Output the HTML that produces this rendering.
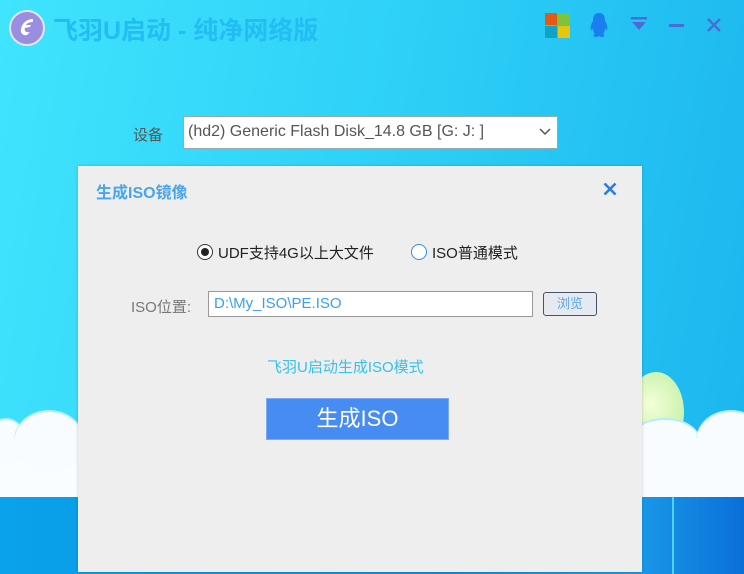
<!DOCTYPE html>
<html><head><meta charset="utf-8"><style>
*{margin:0;padding:0;box-sizing:border-box}
body{width:744px;height:574px;overflow:hidden;position:relative;font-family:"Liberation Sans","Noto Sans CJK SC",sans-serif;background:linear-gradient(100deg,#40e4fc 0%,#2fd2f8 45%,#1bb5ee 100%)}
.abs{position:absolute}
</style></head><body>
<div class="abs" style="left:0;top:497px;width:744px;height:77px;background:linear-gradient(90deg,#0aa2ea,#0c8fe2 60%,#1a9be8 85%,#0a6fd8)"></div>
<!-- clouds left -->
<div class="abs" style="left:0;top:445px;width:80px;height:52px;background:#fafdff"></div>
<div class="abs" style="left:-14px;top:420px;width:40px;height:44px;border-radius:50%;background:#f8fcff;box-shadow:0 -2px 0 #b6ecfa"></div>
<div class="abs" style="left:14px;top:412px;width:70px;height:60px;border-radius:50%;background:#f8fcff;box-shadow:0 -2px 0 #b6ecfa"></div>
<!-- sun and clouds right -->
<div class="abs" style="left:628px;top:372px;width:56px;height:80px;border-radius:50%;background:radial-gradient(circle at 40% 40%,#f4ffd8,#c4f0a8 70%)"></div>
<div class="abs" style="left:642px;top:440px;width:102px;height:57px;background:#f8fcff"></div>
<div class="abs" style="left:630px;top:420px;width:70px;height:44px;border-radius:50%;background:#f8fcff;box-shadow:0 -2px 0 #b6ecfa"></div>
<div class="abs" style="left:696px;top:412px;width:70px;height:60px;border-radius:50%;background:#f8fcff;box-shadow:0 -2px 0 #b6ecfa"></div>
<div class="abs" style="left:672px;top:497px;width:2px;height:77px;background:#4fd0f5"></div>
<!-- logo -->
<div class="abs" style="left:9px;top:10px;width:36px;height:36px;border-radius:50%;background:#9a8ee0;border:2px solid #e8e6f8"></div>
<svg class="abs" style="left:17px;top:17px" width="20" height="22" viewBox="0 0 20 22"><path d="M16 2C10 2 5 6 4 12C3 16 6 19 10 18L13 15C9 16 7 14 8 11L13 10L14 8L9 8C10 6 13 5 16 5Z" fill="#fff"/></svg>
<div class="abs" style="left:53px;top:11px;font-size:25px;font-weight:bold;color:#22bdf2">飞羽U启动 - 纯净网络版</div>
<!-- right icons -->
<div class="abs" style="left:545px;top:13px;width:12px;height:12px;background:#e55a12"></div>
<div class="abs" style="left:558px;top:13px;width:12px;height:12px;background:#7ec43a"></div>
<div class="abs" style="left:545px;top:26px;width:12px;height:12px;background:#10a3c8"></div>
<div class="abs" style="left:558px;top:26px;width:12px;height:12px;background:#e9c40c"></div>
<svg class="abs" style="left:588px;top:12px" width="22" height="26" viewBox="0 0 22 26"><path d="M11 1C6 1 5 5 5 9C3 12 2 16 3 18C4 18 5 17 5 16C5 19 6 21 7 22C5 23 5 25 8 25C10 25 11 24 11 24C11 24 12 25 14 25C17 25 17 23 15 22C16 21 17 19 17 16C17 17 18 18 19 18C20 16 19 12 17 9C17 5 16 1 11 1Z" fill="#1a7df0"/></svg>
<svg class="abs" style="left:630px;top:16px" width="18" height="16"><rect x="1" y="1" width="16" height="2.5" fill="#4a6cd6"/><path d="M2 6H16L9 14Z" fill="#4a6cd6"/></svg>
<div class="abs" style="left:669px;top:24px;width:15px;height:2.5px;background:#4a6cd6"></div>
<svg class="abs" style="left:707px;top:18px" width="14" height="14"><path d="M1 1L13 13M13 1L1 13" stroke="#4a6cd6" stroke-width="2.4"/></svg>
<!-- device -->
<div class="abs" style="left:133px;top:124px;font-size:15px;color:#555">设备</div>
<div class="abs" style="left:183px;top:116px;width:375px;height:33px;background:#fff;border:1px solid #9aa;font-size:16px;color:#555;padding:6px 0 0 4px">(hd2) Generic Flash Disk_14.8 GB [G: J: ]</div>
<svg class="abs" style="left:539px;top:128px" width="12" height="8"><path d="M1 1L6 6L11 1" stroke="#555" stroke-width="1.5" fill="none"/></svg>
<!-- dialog -->
<div class="abs" style="left:78px;top:166px;width:564px;height:406px;background:#eeeeee;box-shadow:0 0 3px rgba(0,0,0,.2)"></div>
<div class="abs" style="left:96px;top:179px;font-size:16px;font-weight:bold;color:#4aa4ec">生成ISO镜像</div>
<svg class="abs" style="left:603px;top:182px" width="14" height="14"><path d="M1.5 1.5L12.5 12.5M12.5 1.5L1.5 12.5" stroke="#2a7be0" stroke-width="2.6"/></svg>
<div class="abs" style="left:197px;top:244px;width:16px;height:16px;border-radius:50%;border:1.5px solid #333;background:#fff"></div>
<div class="abs" style="left:201px;top:248px;width:8px;height:8px;border-radius:50%;background:#222"></div>
<div class="abs" style="left:218px;top:242px;font-size:15px;color:#222">UDF支持4G以上大文件</div>
<div class="abs" style="left:411px;top:244px;width:16px;height:16px;border-radius:50%;border:1.5px solid #3a8ad0;background:#fff"></div>
<div class="abs" style="left:432px;top:242px;font-size:15px;color:#222">ISO普通模式</div>
<div class="abs" style="left:131px;top:296px;font-size:15px;color:#777">ISO位置:</div>
<div class="abs" style="left:208px;top:291px;width:325px;height:26px;background:#fff;border:1px solid #999;font-size:15px;color:#3aa0ec;padding:3px 0 0 5px">D:\My_ISO\PE.ISO</div>
<div class="abs" style="left:543px;top:292px;width:54px;height:24px;border:1px solid #456;border-radius:3px;background:#e6eaf0;font-size:13px;color:#5aa6e8;text-align:center;line-height:22px">浏览</div>
<div class="abs" style="left:267px;top:356px;font-size:15px;color:#38c0e8">飞羽U启动生成ISO模式</div>
<div class="abs" style="left:266px;top:398px;width:183px;height:42px;background:#478cf2;border:1px solid #7aaaf0;color:#fff;font-size:22px;text-align:center;line-height:40px">生成ISO</div>
</body></html>
